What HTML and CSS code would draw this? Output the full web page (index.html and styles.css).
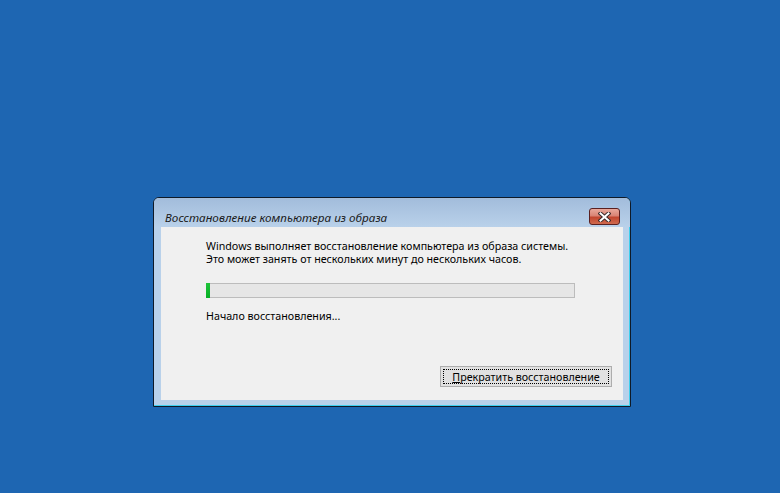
FILE: index.html
```html
<!DOCTYPE html>
<html lang="ru">
<head>
  <meta charset="UTF-8">
  <title>Восстановление компьютера из образа</title>
  <link rel="stylesheet" href="styles.css">
</head>
<body>
  <div class="window">
    <div class="titlebar">
      <span class="title">Восстановление компьютера из образа</span>
      <div class="close">
        <svg width="13" height="10" viewBox="0 0 13 10">
          <path d="M2.5 1.5 L10.5 8.5 M10.5 1.5 L2.5 8.5" stroke="#3b2b2b" stroke-width="4" stroke-linecap="square"/>
          <path d="M2.5 1.5 L10.5 8.5 M10.5 1.5 L2.5 8.5" stroke="#fff" stroke-width="2" stroke-linecap="square"/>
        </svg>
      </div>
    </div>
    <div class="client">
      <p class="msg">Windows выполняет восстановление компьютера из образа системы.<br>Это может занять от нескольких минут до нескольких часов.</p>
      <div class="progress"><div class="fill" style="width: 4px"></div></div>
      <p class="status">Начало восстановления...</p>
      <button class="btn"><span class="u">П</span>рекратить восстановление</button>
    </div>
  </div>
</body>
</html>
```

FILE: styles.css
```css
html, body {
  margin: 0;
  height: 100%;
}

body {
  background-color: #1e66b2;
  padding: 197px 0 0 153px;
  box-sizing: border-box;
  font-family: "Noto Sans", "Liberation Sans", sans-serif;
  font-size: 10.7px;
  color: #000;
}

.window {
  width: 478px;
  box-sizing: border-box;
  border: 1px solid #0f1a28;
  border-radius: 6px 6px 0 0;
  background-color: #b9d1ea;
  box-shadow: inset -1px -1px 0 #3fd0ee;
  padding: 0 7px 6px 7px;
}

.titlebar {
  height: 29px;
  box-sizing: border-box;
  padding-top: 8px;
  margin: 0 -7px;
  padding-left: 11px;
  padding-right: 10px;
  display: flex;
  align-items: center;
  justify-content: space-between;
  border-radius: 5px 5px 0 0;
  background: linear-gradient(#a2bcdb, #b9d1ea);
}

.title {
  font-style: italic;
  font-size: 11.7px;
  color: #1a1a1a;
}

.close {
  width: 31px;
  height: 17px;
  box-sizing: border-box;
  border: 1px solid #5a2020;
  border-radius: 3px;
  background: linear-gradient(#e9a89b 0%, #d98474 45%, #c2462f 55%, #cf6a4e 100%);
  display: flex;
  align-items: center;
  justify-content: center;
}

.client {
  height: 173px;
  box-sizing: border-box;
  background-color: #f0f0f0;
  padding: 13px 11px 13px 45px;
  display: flex;
  flex-direction: column;
}

.msg {
  margin: 0;
  line-height: 13px;
  white-space: nowrap;
}

.progress {
  margin-top: 17px;
  width: 369px;
  height: 15px;
  box-sizing: border-box;
  border: 1px solid #bcbcbc;
  background-color: #e6e6e6;
  position: relative;
}

.fill {
  position: absolute;
  left: -1px;
  top: -1px;
  bottom: -1px;
  background: linear-gradient(#1fc43a, #06b025);
}

.status {
  margin: 12px 0 0 0;
  line-height: 13px;
}

.btn {
  margin-top: auto;
  align-self: flex-end;
  width: 172px;
  height: 21px;
  border: 1px solid #adadad;
  background-color: #e1e1e1;
  font-family: inherit;
  font-size: 10.7px;
  color: #000;
  padding: 0;
  outline: 1px dotted #000;
  outline-offset: -4px;
}

.u {
  text-decoration: underline;
}
```
